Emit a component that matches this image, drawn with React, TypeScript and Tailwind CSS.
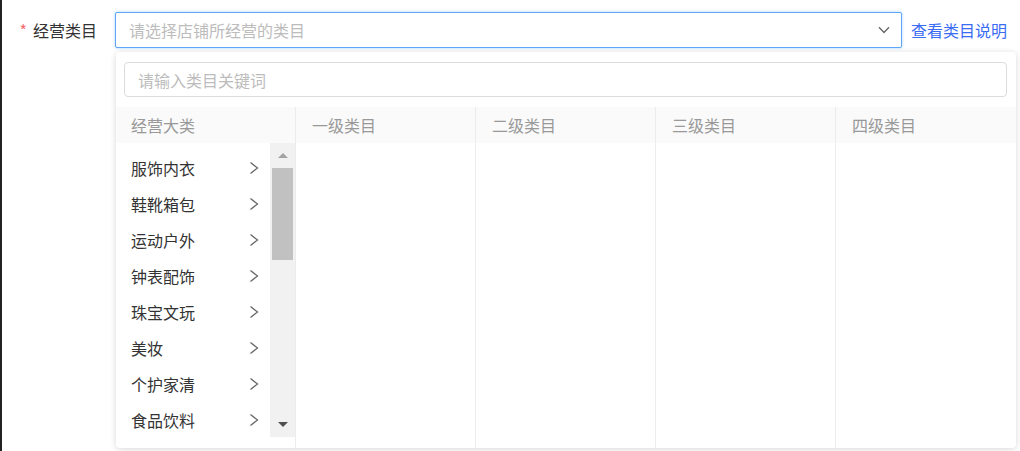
import React from 'react';

const majors = ['服饰内衣', '鞋靴箱包', '运动户外', '钟表配饰', '珠宝文玩', '美妆', '个护家清', '食品饮料'];
const levels = ['一级类目', '二级类目', '三级类目', '四级类目'];

function ChevronRight() {
  return (
    <svg width="10" height="14" viewBox="0 0 10 14" fill="none" className="shrink-0">
      <path d="M1.5 1.5 L8.5 7 L1.5 12.5" stroke="#666" strokeWidth="1.3" />
    </svg>
  );
}

function ChevronDown() {
  return (
    <svg width="12" height="8" viewBox="0 0 12 8" fill="none">
      <path d="M1 1.2 L6 6.5 L11 1.2" stroke="#666" strokeWidth="1.3" />
    </svg>
  );
}

function FakeScrollbar() {
  return (
    <div className="flex w-[25px] shrink-0 flex-col items-center bg-[#f1f1f1]">
      <div className="flex h-[25px] w-full items-center justify-center">
        <div className="h-0 w-0 border-x-[5px] border-b-[5px] border-x-transparent border-b-[#a3a3a3]" />
      </div>
      <div className="h-[92px] w-[21px] bg-[#c1c1c1]" />
      <div className="flex-1" />
      <div className="flex h-[25px] w-full items-center justify-center">
        <div className="h-0 w-0 border-x-[5px] border-t-[5px] border-x-transparent border-t-[#505050]" />
      </div>
    </div>
  );
}

export default function App() {
  return (
    <div
      className="relative h-[451px] w-[1020px] overflow-hidden border-l-2 border-[#222] bg-white text-[16px]"
      style={{ fontFamily: '"Noto Sans CJK SC", "Noto Sans", sans-serif' }}
    >
      <div className="flex items-center pt-3">
        <div className="flex w-[113px] shrink-0 items-center justify-end pr-[18px] text-[#333]">
          <span className="mr-[6px] text-[#f56c6c]">*</span>
          <span>经营类目</span>
        </div>
        <div className="flex h-9 w-[787px] items-center justify-between rounded-[2px] border border-[#5ea6f5] bg-white pl-[13px] pr-[11px] shadow-[0_0_3px_rgba(64,158,255,0.45)]">
          <span className="text-[#bcbcbc]">请选择店铺所经营的类目</span>
          <ChevronDown />
        </div>
        <a className="ml-[9px] text-[#3a6cf4]">查看类目说明</a>
      </div>

      <div className="ml-[114px] mt-1 h-[396px] w-[900px] rounded-[4px] bg-white shadow-[0_1px_6px_rgba(0,0,0,0.16)]">
        <div className="px-2 pb-[10px] pt-[10px]">
          <div className="flex h-[35px] w-[883px] items-center rounded-[4px] border border-[#dcdcdc] px-[13px] text-[#bcbcbc]">
            请输入类目关键词
          </div>
        </div>

        <div className="flex h-[342px]">
          <div className="flex w-[180px] flex-col border-r border-[#ececec]">
            <div className="flex h-9 shrink-0 items-center bg-[#fafafa] pl-[15px] text-[#999]">经营大类</div>
            <div className="flex h-[294px]">
              <ul className="flex-1 pt-[7px]">
                {majors.map((m) => (
                  <li key={m} className="flex h-9 items-center justify-between pl-[15px] pr-[11px] text-[#333]">
                    <span>{m}</span>
                    <ChevronRight />
                  </li>
                ))}
              </ul>
              <FakeScrollbar />
            </div>
          </div>
          {levels.map((l, i) => (
            <div key={l} className={i < 3 ? 'flex w-[180px] flex-col border-r border-[#ececec]' : 'flex w-[180px] flex-col'}>
              <div className="flex h-9 shrink-0 items-center bg-[#fafafa] pl-[16px] text-[#999]">{l}</div>
              <div className="flex-1" />
            </div>
          ))}
        </div>
      </div>
    </div>
  );
}
